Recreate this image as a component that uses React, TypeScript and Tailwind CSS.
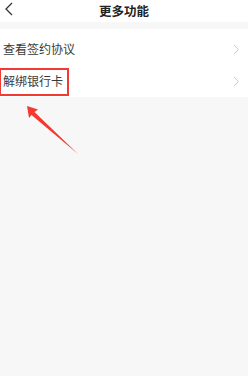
import React from "react";

const font = { fontFamily: '"Noto Sans CJK SC", "Noto Sans", sans-serif' };

function Chevron({ dir }: { dir: "left" | "right" }) {
  return dir === "left" ? (
    <svg width="10" height="14" viewBox="0 0 10 14" fill="none">
      <path d="M8 1 L2 7 L8 13" stroke="#333" strokeWidth="1.3" />
    </svg>
  ) : (
    <svg width="7" height="11" viewBox="0 0 7 11" fill="none">
      <path d="M1 1 L5.5 5.5 L1 10" stroke="#c8c8c8" strokeWidth="1" />
    </svg>
  );
}

function Row({ label, boxed }: { label: string; boxed?: boolean }) {
  return (
    <div className="relative flex h-[32px] items-center justify-between pl-[3px] pr-[8px]">
      <span className="text-[12px] leading-none text-[#3a3a3a]">{label}</span>
      <Chevron dir="right" />
      {boxed && (
        <div className="pointer-events-none absolute left-[-1px] top-[3px] h-[28px] w-[70px] border-2 border-[#f03a32]" />
      )}
    </div>
  );
}

export default function App() {
  return (
    <div className="relative h-[376px] w-[248px] overflow-hidden bg-[#f7f7f7]" style={font}>
      <div className="relative flex h-[22px] items-center justify-center bg-white">
        <div className="absolute left-[4px] top-[2px]">
          <Chevron dir="left" />
        </div>
        <span className="text-[12.5px] font-semibold leading-none text-[#222]">更多功能</span>
      </div>
      <div className="mt-[7px] bg-white pt-[4px]">
        <Row label="查看签约协议" />
        <Row label="解绑银行卡" boxed />
      </div>
      <svg
        className="pointer-events-none absolute left-0 top-0"
        width="248"
        height="376"
        viewBox="0 0 248 376"
      >
        <path d="M27 106 L38 109.5 L34.5 112 L78 154 L31.5 115 L29 118 Z" fill="#f5392e" />
      </svg>
    </div>
  );
}
